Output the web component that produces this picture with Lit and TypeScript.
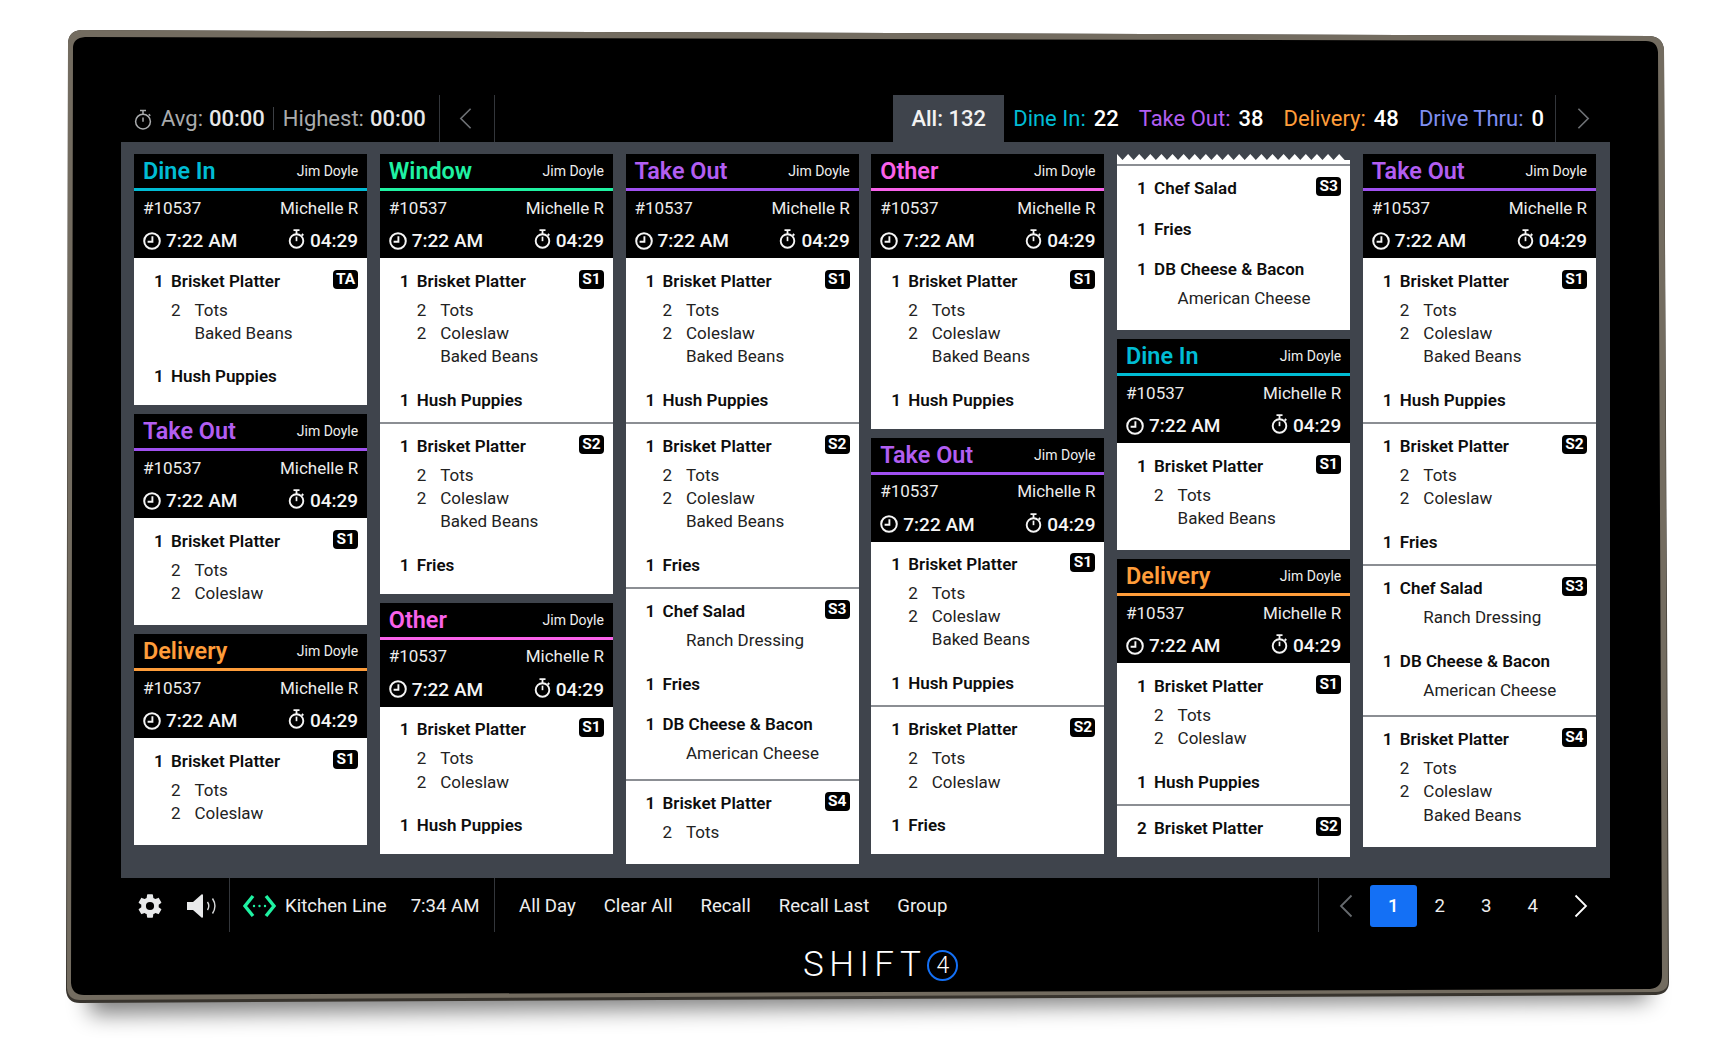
import { LitElement, html, css, svg } from "lit";
import { customElement } from "lit/decorators.js";

type Sub = [string, string];
interface Item { q: string; n: string; subs?: Sub[]; }
interface Section { badge?: string; items: Item[]; }
interface Card { kind?: string; torn?: boolean; sections: Section[]; }

const T: Sub = ["2", "Tots"];
const C: Sub = ["2", "Coleslaw"];
const B: Sub = ["", "Baked Beans"];
const brisket = (...subs: Sub[]): Item => ({ q: "1", n: "Brisket Platter", subs });
const hush: Item = { q: "1", n: "Hush Puppies" };
const fries: Item = { q: "1", n: "Fries" };
const salad: Item = { q: "1", n: "Chef Salad", subs: [["", "Ranch Dressing"]] };
const db: Item = { q: "1", n: "DB Cheese & Bacon", subs: [["", "American Cheese"]] };

const columns: Card[][] = [
  [
    { kind: "Dine In", sections: [{ badge: "TA", items: [brisket(T, B), hush] }] },
    { kind: "Take Out", sections: [{ badge: "S1", items: [brisket(T, C)] }] },
    { kind: "Delivery", sections: [{ badge: "S1", items: [brisket(T, C)] }] },
  ],
  [
    { kind: "Window", sections: [
      { badge: "S1", items: [brisket(T, C, B), hush] },
      { badge: "S2", items: [brisket(T, C, B), fries] },
    ] },
    { kind: "Other", sections: [{ badge: "S1", items: [brisket(T, C), hush] }] },
  ],
  [
    { kind: "Take Out", sections: [
      { badge: "S1", items: [brisket(T, C, B), hush] },
      { badge: "S2", items: [brisket(T, C, B), fries] },
      { badge: "S3", items: [salad, fries, db] },
      { badge: "S4", items: [brisket(T)] },
    ] },
  ],
  [
    { kind: "Other", sections: [{ badge: "S1", items: [brisket(T, C, B), hush] }] },
    { kind: "Take Out", sections: [
      { badge: "S1", items: [brisket(T, C, B), hush] },
      { badge: "S2", items: [brisket(T, C), fries] },
    ] },
  ],
  [
    { torn: true, sections: [{ badge: "S3", items: [{ q: "1", n: "Chef Salad" }, fries, db] }] },
    { kind: "Dine In", sections: [{ badge: "S1", items: [brisket(T, B)] }] },
    { kind: "Delivery", sections: [
      { badge: "S1", items: [brisket(T, C), hush] },
      { badge: "S2", items: [{ q: "2", n: "Brisket Platter" }] },
    ] },
  ],
  [
    { kind: "Take Out", sections: [
      { badge: "S1", items: [brisket(T, C, B), hush] },
      { badge: "S2", items: [brisket(T, C), fries] },
      { badge: "S3", items: [salad, db] },
      { badge: "S4", items: [brisket(T, C, B)] },
    ] },
  ],
];

const kindClass: Record<string, string> = {
  "Dine In": "k-dine",
  "Take Out": "k-take",
  "Window": "k-window",
  "Other": "k-other",
  "Delivery": "k-delivery",
};

const clock = (cls = "ic") => html`<svg class=${cls} viewBox="0 0 18 18" fill="none" stroke="currentColor" stroke-width="2"><circle cx="9" cy="9" r="7.8"/><path d="M9.4 4.2V9.8H4.6" stroke-width="1.9"/></svg>`;
const watch = (cls = "ic-w") => html`<svg class=${cls} viewBox="0 0 18 21" fill="none" stroke="currentColor" stroke-width="2"><circle cx="9" cy="12.6" r="7.2"/><path d="M5.8 1.2h6.4M9 1.2v4M14.6 5.2l1.6 1.6" stroke-width="1.9"/><path d="M9 12.8V8" stroke-width="1.8"/></svg>`;
const timer = () => html`<svg class="timer" viewBox="0 0 18 21" fill="none" stroke="currentColor" stroke-width="1.5"><circle cx="9" cy="12.6" r="7.4"/><path d="M6 1.5h6M9 1.5v3.6M14.8 5.2l1.5 1.5"/><path d="M9 12.8V8.4"/></svg>`;
const chevron = (dir: "l" | "r", cls: string) => html`<svg class=${cls} viewBox="0 0 14 24" fill="none" stroke="currentColor" stroke-width="1.8"><path d=${dir === "l" ? "M12.5 1.5 2 12l10.5 10.5" : "M1.5 1.5 12 12 1.5 22.5"}/></svg>`;

const teeth = () => {
  const w = 233, p = 11.1, pts: string[] = ["0,6"];
  for (let x = 0; x <= w; x += p) pts.push(`${x.toFixed(1)},0`, `${(x + p / 2).toFixed(1)},6`);
  pts.push(`${w},6`);
  return pts.join(" ");
};

@customElement("app-root")
export class AppRoot extends LitElement {
  static styles = css`
    :host { display: block; position: relative; width: 1727px; height: 1057px; overflow: hidden; background: #fff;
      font-family: Roboto, "Liberation Sans", sans-serif; color: #fff; }
    .device { position: absolute; left: 0; top: 0; width: 1727px; height: 1057px; }
    .screen { position: relative; margin-left: 121px; padding-top: 95px; width: 1489px; }

    .top { display: flex; height: 47px; align-items: stretch; font-size: 22px; }
    .top-left { display: flex; align-items: center; padding-left: 13px; color: #a9abad; }
    .top-left svg.timer { width: 18px; height: 21px; margin-right: 9px; margin-top: 1px; }
    .top-left b { font-weight: 500; color: #e6e7e8; margin-left: 6px; }
    .thin { width: 1px; height: 23px; background: #3c3f44; margin: 0 8.5px; }
    .cell { display: flex; align-items: center; justify-content: center; border-left: 1px solid #33363b; }
    .cell.prev { width: 54px; margin-left: 13px; border-right: 1px solid #33363b; color: #6d7074; }
    .cell.prev .top-chev { margin-left: -2px; }
    .cell.next { width: 54px; margin-left: 11px; color: #6d7074; }
    .top-chev { width: 13px; height: 23px; }
    .spacer { flex: 1; }
    .tab { width: 111px; background: #3f444c; display: flex; align-items: center; justify-content: center; font-weight: 500; color: #f2f2f2; }
    .stats { display: flex; align-items: center; gap: 20px; margin-left: 9px; }
    .stat b { font-weight: 500; color: #fff; margin-left: 8px; }
    .c-dine { color: #00bcd4; } .c-take { color: #b25ef2; } .c-del { color: #ff9d3a; } .c-drive { color: #7f8ff0; }

    .panel { height: 736px; background: #3f444c; padding: 12px 14px 12px 13px; box-sizing: border-box; overflow: hidden;
      display: grid; grid-template-columns: repeat(6, 1fr); column-gap: 12.6px; align-items: start; }
    .col { display: flex; flex-direction: column; gap: 9px; }

    .head { background: #000; height: 104px; box-sizing: border-box; }
    .title { height: 37px; box-sizing: border-box; border-bottom: 3px solid; display: flex; align-items: center; justify-content: space-between; padding: 0 9px; }
    .title span { font-size: 23.4px; font-weight: 600; }
    .title small { font-size: 14px; color: #eee; }
    .k-dine { color: #00bcd4; border-color: #00bcd4; }
    .k-take { color: #b25ef2; border-color: #a050f0; }
    .k-window { color: #1ff2a2; border-color: #1ff2a2; }
    .k-other { color: #f962ea; border-color: #f962ea; }
    .k-delivery { color: #ff9d3a; border-color: #ff9d3a; }
    .row { display: flex; justify-content: space-between; align-items: center; padding: 0 9px; }
    .order { height: 33px; font-size: 17px; color: #ececec; }
    .times { height: 33px; font-size: 19px; font-weight: 500; color: #f5f5f5; }
    .times > div { display: flex; align-items: center; gap: 5px; }
    .ic { width: 18px; height: 18px; }
    .ic-w { width: 17px; height: 20px; margin-top: -3px; }

    .body { background: #fff; color: #111; }
    .teeth { display: block; width: 100%; height: 6px; background: #3f444c; }
    .tear-gap { height: 4px; }
    .section { position: relative; padding: 10.3px 0 10px; border-top: 2px solid #8b8e93; display: flex; flex-direction: column; gap: 16.5px; }
    .section.first { border-top: 0; padding-top: 10.5px; }
    .section:last-child { padding-bottom: 17px; }
    .main { display: flex; height: 24px; line-height: 24px; padding-left: 20px; font-size: 17px; font-weight: 600; color: #0d0d0d; }
    .main .q { width: 17px; }
    .subs { margin: 6px 0 3px; }
    .sub { display: flex; height: 23.2px; line-height: 23.2px; padding-left: 37px; font-size: 17px; color: #222; }
    .sub .q { width: 23.5px; }
    .badge { position: absolute; right: 9px; top: 11px; width: 25px; height: 19px; border-radius: 4px; background: #000; color: #fff;
      font-size: 15.5px; font-weight: 700; line-height: 19px; text-align: center; }
    .section.first .badge { top: 11.5px; }

    .bottom { display: flex; height: 54px; align-items: stretch; font-size: 18.6px; color: #eee; }
    .tools, .status, .menu, .pager { padding-top: 2px; box-sizing: border-box; }
    .tools { display: flex; align-items: center; padding-left: 15px; width: 109px; border-right: 1px solid #33363b; }
    .gear { width: 28px; height: 28px; }
    .speaker { width: 32px; height: 24px; margin-left: 22px; }
    .status { display: flex; align-items: center; width: 265px; padding-left: 13px; border-right: 1px solid #33363b; }
    .net { width: 33px; height: 24px; margin-right: 9px; }
    .status .clock { margin-left: 24px; }
    .menu { display: flex; align-items: center; gap: 28px; padding-left: 24px; }
    .pager { display: flex; align-items: center; border-left: 1px solid #33363b; padding-left: 20px; width: 292px; }
    .pg-prev { width: 14px; height: 30px; color: #666a6e; margin-right: 17px; }
    .pg { width: 46.5px; height: 42px; display: flex; align-items: center; justify-content: center; border-radius: 3px; }
    .pg.on { background: #1470f5; color: #fff; font-weight: 500; }
    .pg-next { width: 14px; height: 30px; color: #fff; margin-left: 18px; }

    .logo { display: flex; align-items: center; height: 40px; margin-top: 13px; padding-left: 682px; }
    .logo .word { font-size: 35px; font-weight: 300; letter-spacing: 5.5px; line-height: 40px; color: #fff; }
    .logo .four { width: 31px; height: 31px; margin-left: 1px; border: 2.5px solid #1470f5; border-radius: 50%; box-sizing: border-box;
      display: flex; align-items: center; justify-content: center; font-size: 23px; font-weight: 300; line-height: 1; }
  `;

  private deviceSvg() {
    const outer = "M81 30 L1650 36 Q1663 37 1664 50 L1669 982 Q1669 994 1656 995 L80 1003 Q67 1003 66 990 L68 44 Q68 31 81 30Z";
    const mid = "M81 30 L1650 36 Q1663 37 1664 50 L1668 982 Q1668 991 1656 992 L80 1000 Q68 1000 67 988 L68 44 Q68 31 81 30Z";
    const inner = "M85 37 L1646 41 Q1657 41 1658 52 L1662 975 Q1662 988 1650 989 L84 995 Q72 995 71 983 L73 48 Q73 38 85 37Z";
    return html`<svg class="device" viewBox="0 0 1727 1057">
      <defs>
        <filter id="sh" x="-5%" y="-50%" width="110%" height="250%"><feGaussianBlur stdDeviation="11"/></filter>
      </defs>
      ${svg`<path d="M88 975 L1645 970 L1650 1000 L90 1014Z" fill="#000" opacity=".5" filter="url(#sh)"/>
      <path d=${outer} fill="#38342e"/>
      <path d=${mid} fill="#736c60"/>
      <path d=${inner} fill="#000"/>`}
    </svg>`;
  }

  private card(c: Card) {
    return html`<div class="card">
      ${c.kind ? html`<div class="head">
        <div class="title ${kindClass[c.kind]}"><span>${c.kind}</span><small>Jim Doyle</small></div>
        <div class="row order"><span>#10537</span><span>Michelle R</span></div>
        <div class="row times"><div>${clock()}<span>7:22 AM</span></div><div>${watch()}<span>04:29</span></div></div>
      </div>` : ""}
      <div class="body">
        ${c.torn ? html`<svg class="teeth" viewBox="0 0 233 6" preserveAspectRatio="none"><polygon points=${teeth()} fill="#fff"/></svg><div class="tear-gap"></div>` : ""}
        ${c.sections.map((s, i) => html`<div class="section ${i === 0 && !c.torn ? "first" : ""}">
          ${s.badge ? html`<div class="badge">${s.badge}</div>` : ""}
          ${s.items.map((it) => html`<div class="item">
            <div class="main"><span class="q">${it.q}</span><span>${it.n}</span></div>
            ${it.subs ? html`<div class="subs">${it.subs.map(([q, n]) => html`<div class="sub"><span class="q">${q}</span><span>${n}</span></div>`)}</div>` : ""}
          </div>`)}
        </div>`)}
      </div>
    </div>`;
  }

  render() {
    return html`
      ${this.deviceSvg()}
      <div class="screen">
        <div class="top">
          <div class="top-left">
            ${timer()}
            <span>Avg:</span><b>00:00</b>
            <div class="thin"></div>
            <span>Highest:</span><b>00:00</b>
          </div>
          <div class="cell prev">${chevron("l", "top-chev")}</div>
          <div class="spacer"></div>
          <div class="tab">All: 132</div>
          <div class="stats">
            <div class="stat"><span class="c-dine">Dine In:</span><b>22</b></div>
            <div class="stat"><span class="c-take">Take Out:</span><b>38</b></div>
            <div class="stat"><span class="c-del">Delivery:</span><b>48</b></div>
            <div class="stat"><span class="c-drive">Drive Thru:</span><b>0</b></div>
          </div>
          <div class="cell next">${chevron("r", "top-chev")}</div>
        </div>
        <div class="panel">
          ${columns.map((col) => html`<div class="col">${col.map((c) => this.card(c))}</div>`)}
        </div>
        <div class="bottom">
          <div class="tools">
            <svg class="gear" viewBox="0 0 24 24" fill="#e8e9ea"><path d="M19.43 12.98c.04-.32.07-.64.07-.98s-.03-.66-.07-.98l2.11-1.65c.19-.15.24-.42.12-.64l-2-3.46c-.12-.22-.39-.3-.61-.22l-2.49 1c-.52-.4-1.08-.73-1.69-.98l-.38-2.65A.488.488 0 0 0 14 2h-4c-.25 0-.46.18-.49.42l-.38 2.65c-.61.25-1.17.59-1.69.98l-2.49-1c-.23-.09-.49 0-.61.22l-2 3.46c-.13.22-.07.49.12.64l2.11 1.65c-.04.32-.07.65-.07.98s.03.66.07.98l-2.11 1.65c-.19.15-.24.42-.12.64l2 3.46c.12.22.39.3.61.22l2.49-1c.52.4 1.08.73 1.69.98l.38 2.65c.03.24.24.42.49.42h4c.25 0 .46-.18.49-.42l.38-2.65c.61-.25 1.17-.59 1.69-.98l2.49 1c.23.09.49 0 .61-.22l2-3.46c.12-.22.07-.49-.12-.64l-2.11-1.65zM12 15.5a3.5 3.5 0 1 1 0-7 3.5 3.5 0 0 1 0 7z"/></svg>
            <svg class="speaker" viewBox="0 0 32 24" fill="none"><path d="M1 8h6L15.5 0.5c.8-.6 1.5-.2 1.5.8v21.4c0 1-.7 1.4-1.5.8L7 16H1z" fill="#e8e9ea"/><path d="M21.5 8c1.6 2.5 1.6 5.5 0 8M26.5 4.5c3 4.6 3 10.4 0 15" stroke="#d8d9da" stroke-width="1.4"/></svg>
          </div>
          <div class="status">
            <svg class="net" viewBox="0 0 33 24" fill="none" stroke="#1ff2a2" stroke-width="3.4"><path d="M10 2 2 12l8 10M23 2l8 10-8 10"/><circle cx="11" cy="12" r="1.2" fill="#1ff2a2" stroke="none"/><circle cx="16.5" cy="12" r="1.2" fill="#1ff2a2" stroke="none"/><circle cx="22" cy="12" r="1.2" fill="#1ff2a2" stroke="none"/></svg>
            <span>Kitchen Line</span><span class="clock">7:34 AM</span>
          </div>
          <div class="menu"><span>All Day</span><span>Clear All</span><span>Recall</span><span>Recall Last</span><span>Group</span></div>
          <div class="spacer"></div>
          <div class="pager">
            ${chevron("l", "pg-prev")}
            <div class="pg on">1</div><div class="pg">2</div><div class="pg">3</div><div class="pg">4</div>
            ${chevron("r", "pg-next")}
          </div>
        </div>
        <div class="logo"><span class="word">SHIFT</span><span class="four">4</span></div>
      </div>
    `;
  }
}
